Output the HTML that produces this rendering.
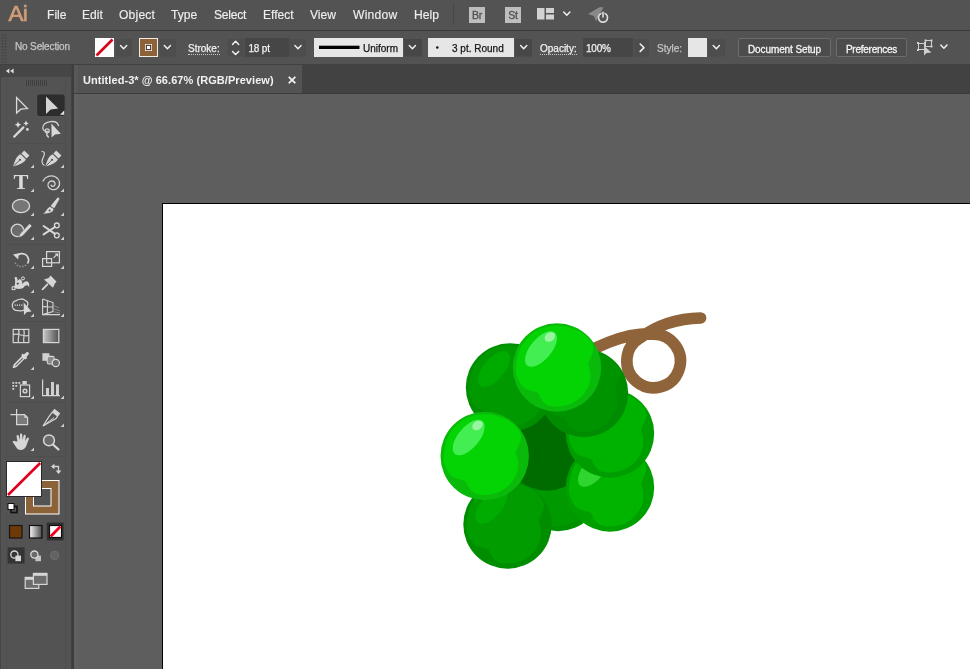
<!DOCTYPE html>
<html lang="en">
<head>
<meta charset="utf-8">
<title>Untitled-3* @ 66.67% (RGB/Preview)</title>
<style>
*{box-sizing:border-box;margin:0;padding:0}
html,body{width:970px;height:669px;overflow:hidden;background:#535353}
body{position:relative;will-change:transform;font-family:"Liberation Sans",sans-serif;color:#e6e6e6;font-size:12px}
svg{position:absolute;overflow:visible;display:block}
#menubar{position:absolute;left:0;top:0;width:970px;height:30px;background:#535353}
#logo{position:absolute;left:8.500px;top:1px;font-size:22.500px;line-height:26px;color:#cf9c76;letter-spacing:-0.800px;-webkit-text-stroke:0.700px #cf9c76}
#menubar .mi{position:absolute;top:7px;font-size:12.100px;line-height:16px;color:#eeeeee;white-space:nowrap;-webkit-text-stroke:0.150px #eeeeee}
.appbox{position:absolute;top:7px;width:16px;height:16px;background:#bebebe;color:#505050;font-size:10.500px;font-weight:400;line-height:17px;text-align:center;letter-spacing:-0.200px;-webkit-text-stroke:0.300px #505050}
#sepline{position:absolute;left:0;top:30px;width:970px;height:1px;background:#3b3b3b}
#ctrl{position:absolute;left:0;top:31px;width:970px;height:33px;background:#535353}
#ctrlb{position:absolute;left:0;top:64px;width:970px;height:1px;background:#404040}
#ctrl .t{position:absolute;font-size:10px;line-height:10.500px;padding-top:0.500px;top:12px;white-space:nowrap;color:#f0f0f0;-webkit-text-stroke:0.250px currentColor}
#ctrl .lab{border-bottom:1px dotted #c8c8c8;padding-bottom:0}
#ctrl .dk{position:absolute;top:7px;height:19px;background:#464646}
#ctrl .lt{position:absolute;top:7px;height:19px;background:#e6e6e6;color:#161616}
#ctrl .btn{position:absolute;top:7px;height:19px;background:#4c4c4c;border:1px solid #6c6c6c;border-radius:2px;font-size:10px;line-height:21px;text-align:center;color:#f4f4f4;white-space:nowrap;-webkit-text-stroke:0.300px #f4f4f4}
#tabrow{position:absolute;left:74px;top:65px;width:896px;height:29px;background:#424242;border-bottom:1px solid #3c3c3c}
#tab{position:absolute;left:0;top:0;width:228px;height:28px;background:#535353}
#tabtxt{position:absolute;left:9px;top:8px;font-size:11px;font-weight:700;line-height:14px;color:#f2f2f2;white-space:nowrap;letter-spacing:0.060px}
#tabx{position:absolute;left:213.500px;top:7.500px;font-size:15.500px;font-weight:700;line-height:14px;color:#f2f2f2}
#canvas{position:absolute;left:74px;top:94px;width:896px;height:575px;background:#5e5e5e}
#artboard{position:absolute;left:162px;top:203px;width:820px;height:480px;background:#fff;border:1px solid #000}
#tools{position:absolute;left:0;top:65px;width:74px;height:604px;background:#535353}
#toolhead{position:absolute;left:1px;top:0;width:71px;height:12px;background:#464646}
#toolbr{position:absolute;left:71px;top:0;width:3px;height:604px;background:linear-gradient(90deg,#494949 0,#3c3c3c 34%,#3c3c3c 80%,#4c4c4c 100%)}
#toolbl{position:absolute;left:0;top:0;width:1px;height:604px;background:#454545}
#edgeband{position:absolute;left:74px;top:65px;width:4px;height:604px;background:linear-gradient(180deg,#585858 0,#585858 28px,#3c3c3c 28px,#3c3c3c 29px,#616161 29px)}
.tl{position:absolute;top:12px;width:1px;height:592px;background:#4f4f4f}
</style>
</head>
<body>
<div id="menubar">
  <div id="logo">Ai</div>
  <span class="mi" style="left:47px">File</span>
  <span class="mi" style="left:82px">Edit</span>
  <span class="mi" style="left:119px;letter-spacing:0.200px">Object</span>
  <span class="mi" style="left:171px">Type</span>
  <span class="mi" style="left:214px;letter-spacing:-0.250px">Select</span>
  <span class="mi" style="left:263px">Effect</span>
  <span class="mi" style="left:310px">View</span>
  <span class="mi" style="left:353px;letter-spacing:0.250px">Window</span>
  <span class="mi" style="left:414px">Help</span>
  <div style="position:absolute;left:453px;top:3px;width:1px;height:22px;background:#474747"></div>
  <div class="appbox" style="left:469px">Br</div>
  <div class="appbox" style="left:505px">St</div>
</div>
<div id="sepline"></div>
<div id="ctrl">
  <span class="t" style="left:15px;top:10.500px;color:#c6c6c6;font-size:10px;letter-spacing:-0.150px">No Selection</span>
  <span class="t lab" style="left:188px">Stroke:</span>
  <div class="dk" style="left:245px;width:44px"></div>
  <span class="t" style="left:248.500px;letter-spacing:-0.200px">18 pt</span>
  <div class="lt" style="left:314px;width:89px"></div>
  <span class="t" style="left:363px;color:#161616">Uniform</span>
  <div class="lt" style="left:428px;width:86px"></div>
  <span class="t" style="left:452px;color:#161616">3 pt. Round</span>
  <span class="t lab" style="left:540px">Opacity:</span>
  <div class="dk" style="left:583px;width:50px"></div>
  <span class="t" style="left:586px;letter-spacing:-0.200px">100%</span>
  <span class="t" style="left:657px;color:#c4c4c4">Style:</span>
  <div class="lt" style="left:688px;width:19px"></div>
  <div class="btn" style="left:738px;width:93px;letter-spacing:-0.100px">Document Setup</div>
  <div class="btn" style="left:836px;width:71px;letter-spacing:-0.250px">Preferences</div>
</div>
<div id="ctrlb"></div>
<svg id="topsvg" width="970" height="65" viewBox="0 0 970 65" style="left:0;top:0">
<g fill="#d2d2d2"><rect x="537" y="8" width="7.5" height="11.5"/><rect x="546" y="8" width="8" height="5"/><rect x="546" y="14.5" width="8" height="5"/></g>
<path d="M563.700,12.000 L566.800,15.200 L569.900,12.000" fill="none" stroke="#f4f4f4" stroke-width="1.400" stroke-linecap="round" stroke-linejoin="round"/>
<g><path d="M588,14 L600,7 L603.500,7.500 L599.500,14 L596,21.500 L594,16 Z" fill="#8a8a8a"/><circle cx="603" cy="17.600" r="4.500" fill="#535353" stroke="#dadada" stroke-width="1.700"/><rect x="601.600" y="11" width="2.800" height="6.500" fill="#535353"/><rect x="602.200" y="11.600" width="1.600" height="6" fill="#dadada"/></g>
<path d="M2.500,34 V63 M5.500,34 V63" stroke="#434343" stroke-width="1.600" stroke-dasharray="1.500 1.500" fill="none"/>
<rect x="116" y="39" width="16" height="17.5" fill="#4d4d4d"/>
<rect x="160" y="39" width="16" height="17.5" fill="#4d4d4d"/>
<rect x="228" y="39" width="16" height="17.5" fill="#4d4d4d"/>
<rect x="289" y="39" width="17" height="17.5" fill="#4d4d4d"/>
<rect x="404" y="39" width="18" height="17.5" fill="#474747"/>
<rect x="515" y="39" width="17" height="17.5" fill="#474747"/>
<rect x="634" y="39" width="15" height="17.5" fill="#4d4d4d"/>
<rect x="708" y="39" width="17" height="17.5" fill="#4d4d4d"/>
<rect x="95" y="38" width="19" height="19" fill="#fff"/>
<path d="M96.500,55.500 L112.500,39.500" stroke="#d2081f" stroke-width="2.700" fill="none"/>
<path d="M120.500,45.600 L123.600,48.800 L126.700,45.600" fill="none" stroke="#f4f4f4" stroke-width="1.400" stroke-linecap="round" stroke-linejoin="round"/>
<rect x="139.5" y="38.5" width="18" height="18" fill="#8c6239" stroke="#f4ebe2" stroke-width="1"/>
<rect x="145.5" y="44.5" width="6" height="6" fill="#fff" stroke="#fff" stroke-width="1"/><rect x="146.3" y="45.3" width="4.4" height="4.4" fill="none" stroke="#3a2a1a" stroke-width="1.1"/>
<path d="M164.300,45.600 L167.400,48.800 L170.500,45.600" fill="none" stroke="#f4f4f4" stroke-width="1.400" stroke-linecap="round" stroke-linejoin="round"/>
<path d="M232.500,44.400 L235.600,41.200 L238.700,44.400" fill="none" stroke="#f4f4f4" stroke-width="1.400" stroke-linecap="round" stroke-linejoin="round"/>
<path d="M232.500,51.400 L235.600,54.600 L238.700,51.400" fill="none" stroke="#f4f4f4" stroke-width="1.400" stroke-linecap="round" stroke-linejoin="round"/>
<path d="M294.900,45.600 L298.000,48.800 L301.100,45.600" fill="none" stroke="#f4f4f4" stroke-width="1.400" stroke-linecap="round" stroke-linejoin="round"/>
<rect x="319" y="45.7" width="40.5" height="3.3" fill="#000"/>
<path d="M409.300,45.600 L412.400,48.800 L415.500,45.600" fill="none" stroke="#f4f4f4" stroke-width="1.400" stroke-linecap="round" stroke-linejoin="round"/>
<circle cx="437.300" cy="47.600" r="1.250" fill="#111"/>
<path d="M520.600,45.600 L523.700,48.800 L526.800,45.600" fill="none" stroke="#f4f4f4" stroke-width="1.400" stroke-linecap="round" stroke-linejoin="round"/>
<path d="M640.2,44 L644,47.7 L640.2,51.4" fill="none" stroke="#f2f2f2" stroke-width="1.6" stroke-linecap="round" stroke-linejoin="round"/>
<path d="M713.200,45.600 L716.300,48.800 L719.400,45.600" fill="none" stroke="#f4f4f4" stroke-width="1.400" stroke-linecap="round" stroke-linejoin="round"/>
<g fill="none" stroke="#cfcfcf" stroke-width="1"><rect x="918.5" y="43.5" width="6" height="6"/><rect x="925.5" y="40.5" width="6" height="6"/></g>
<g fill="#cfcfcf"><rect x="917" y="42" width="2" height="2"/><rect x="924" y="42" width="2" height="2"/><rect x="917" y="49" width="2" height="2"/><rect x="924" y="49" width="2" height="2"/><rect x="924.5" y="39.5" width="2" height="2"/><rect x="930.5" y="39.5" width="2" height="2"/><rect x="930.5" y="45.5" width="2" height="2"/><path d="M924,46 L924,55.5 L926.6,53 L931.5,52.6 Z"/></g>
<path d="M940.800,45.000 L943.900,48.200 L947.000,45.000" fill="none" stroke="#f4f4f4" stroke-width="1.400" stroke-linecap="round" stroke-linejoin="round"/>
</svg>
<div id="tabrow"><div id="tab"><span id="tabtxt">Untitled-3* @ 66.67% (RGB/Preview)</span><span id="tabx">×</span></div></div>
<div id="canvas"></div>
<div id="artboard"></div>
<!--ART-->
<svg id="art" width="970" height="669" viewBox="0 0 970 669" style="left:0;top:0">
<!-- stem -->
<path d="M596,347.800 C610,341 626,335.500 640,334.200 C645,333.700 650,333.800 653.600,334.200 A26.800,26.800 0 1 1 640.200,337.800 C654,327.500 674,318.500 700.600,318" fill="none" stroke="#8f643a" stroke-width="11.600" stroke-linecap="round" stroke-linejoin="round"/>
<!-- bottom centre -->
<g transform="translate(558,487)"><circle r="44.200" fill="#009000"/><path d="M0.0,-42.0 C7.0,-42.1 15.8,-39.2 21.3,-36.8 C26.7,-34.4 30.4,-30.6 32.9,-27.6 C35.5,-24.7 36.2,-22.1 36.4,-19.3 C36.6,-16.6 35.1,-13.7 34.2,-11.1 C33.4,-8.5 31.5,-6.2 31.3,-3.8 C31.0,-1.5 32.5,0.7 32.9,2.9 C33.2,5.0 33.5,6.4 33.3,8.9 C33.1,11.5 33.1,14.9 31.6,18.2 C30.1,21.6 27.5,26.1 24.4,29.1 C21.4,32.1 17.3,34.8 13.3,36.5 C9.2,38.1 3.9,38.9 0.0,39.0 C-3.9,39.1 -7.4,38.3 -10.0,37.2 C-12.5,36.1 -13.7,34.6 -15.2,32.6 C-16.8,30.7 -17.3,27.2 -19.3,25.6 C-21.3,23.9 -24.8,23.8 -27.2,22.8 C-29.6,21.8 -31.7,21.5 -33.8,19.5 C-35.8,17.5 -38.2,13.8 -39.4,10.6 C-40.6,7.3 -41.6,5.2 -41.0,0.0 C-40.4,-5.2 -39.3,-14.7 -35.9,-20.8 C-32.6,-26.8 -27.0,-32.8 -21.0,-36.4 C-15.0,-39.9 -7.0,-41.9 0.0,-42.0 Z" fill="#009a00"/></g>
<!-- bottom left -->
<g transform="translate(507.5,524.5)"><circle r="44.200" fill="#008e00"/><path d="M0.0,-42.0 C7.0,-42.1 15.8,-39.2 21.3,-36.8 C26.7,-34.4 30.4,-30.6 32.9,-27.6 C35.5,-24.7 36.2,-22.1 36.4,-19.3 C36.6,-16.6 35.1,-13.7 34.2,-11.1 C33.4,-8.5 31.5,-6.2 31.3,-3.8 C31.0,-1.5 32.5,0.7 32.9,2.9 C33.2,5.0 33.5,6.4 33.3,8.9 C33.1,11.5 33.1,14.9 31.6,18.2 C30.1,21.6 27.5,26.1 24.4,29.1 C21.4,32.1 17.3,34.8 13.3,36.5 C9.2,38.1 3.9,38.9 0.0,39.0 C-3.9,39.1 -7.4,38.3 -10.0,37.2 C-12.5,36.1 -13.7,34.6 -15.2,32.6 C-16.8,30.7 -17.3,27.2 -19.3,25.6 C-21.3,23.9 -24.8,23.8 -27.2,22.8 C-29.6,21.8 -31.7,21.5 -33.8,19.5 C-35.8,17.5 -38.2,13.8 -39.4,10.6 C-40.6,7.3 -41.6,5.2 -41.0,0.0 C-40.4,-5.2 -39.3,-14.7 -35.9,-20.8 C-32.6,-26.8 -27.0,-32.8 -21.0,-36.4 C-15.0,-39.9 -7.0,-41.9 0.0,-42.0 Z" fill="#009c00"/><ellipse cx="-16" cy="-18.500" rx="10.500" ry="21.500" transform="rotate(40 -16 -18.500)" fill="#00ac00"/></g>
<!-- centre dark -->
<circle cx="547" cy="446.500" r="44.200" fill="#006c00"/>
<!-- right lower -->
<g transform="translate(610,487.5)"><circle r="44.200" fill="#009f00"/><path d="M0.0,-42.0 C7.0,-42.1 15.8,-39.2 21.3,-36.8 C26.7,-34.4 30.4,-30.6 32.9,-27.6 C35.5,-24.7 36.2,-22.1 36.4,-19.3 C36.6,-16.6 35.1,-13.7 34.2,-11.1 C33.4,-8.5 31.5,-6.2 31.3,-3.8 C31.0,-1.5 32.5,0.7 32.9,2.9 C33.2,5.0 33.5,6.4 33.3,8.9 C33.1,11.5 33.1,14.9 31.6,18.2 C30.1,21.6 27.5,26.1 24.4,29.1 C21.4,32.1 17.3,34.8 13.3,36.5 C9.2,38.1 3.9,38.9 0.0,39.0 C-3.9,39.1 -7.4,38.3 -10.0,37.2 C-12.5,36.1 -13.7,34.6 -15.2,32.6 C-16.8,30.7 -17.3,27.2 -19.3,25.6 C-21.3,23.9 -24.8,23.8 -27.2,22.8 C-29.6,21.8 -31.7,21.5 -33.8,19.5 C-35.8,17.5 -38.2,13.8 -39.4,10.6 C-40.6,7.3 -41.6,5.2 -41.0,0.0 C-40.4,-5.2 -39.3,-14.7 -35.9,-20.8 C-32.6,-26.8 -27.0,-32.8 -21.0,-36.4 C-15.0,-39.9 -7.0,-41.9 0.0,-42.0 Z" fill="#00b400"/><ellipse cx="-16" cy="-18.500" rx="10.500" ry="21.500" transform="rotate(40 -16 -18.500)" fill="#2fd62f"/></g>
<!-- right mid -->
<g transform="translate(610,433.5)"><circle r="44.200" fill="#009d00"/><path d="M0.0,-42.0 C7.0,-42.1 15.8,-39.2 21.3,-36.8 C26.7,-34.4 30.4,-30.6 32.9,-27.6 C35.5,-24.7 36.2,-22.1 36.4,-19.3 C36.6,-16.6 35.1,-13.7 34.2,-11.1 C33.4,-8.5 31.5,-6.2 31.3,-3.8 C31.0,-1.5 32.5,0.7 32.9,2.9 C33.2,5.0 33.5,6.4 33.3,8.9 C33.1,11.5 33.1,14.9 31.6,18.2 C30.1,21.6 27.5,26.1 24.4,29.1 C21.4,32.1 17.3,34.8 13.3,36.5 C9.2,38.1 3.9,38.9 0.0,39.0 C-3.9,39.1 -7.4,38.3 -10.0,37.2 C-12.5,36.1 -13.7,34.6 -15.2,32.6 C-16.8,30.7 -17.3,27.2 -19.3,25.6 C-21.3,23.9 -24.8,23.8 -27.2,22.8 C-29.6,21.8 -31.7,21.5 -33.8,19.5 C-35.8,17.5 -38.2,13.8 -39.4,10.6 C-40.6,7.3 -41.6,5.2 -41.0,0.0 C-40.4,-5.2 -39.3,-14.7 -35.9,-20.8 C-32.6,-26.8 -27.0,-32.8 -21.0,-36.4 C-15.0,-39.9 -7.0,-41.9 0.0,-42.0 Z" fill="#00b200"/></g>
<!-- top-left dark -->
<g transform="translate(510,387.5)"><circle r="44.200" fill="#008e00"/><path d="M0.0,-42.0 C7.0,-42.1 15.8,-39.2 21.3,-36.8 C26.7,-34.4 30.4,-30.6 32.9,-27.6 C35.5,-24.7 36.2,-22.1 36.4,-19.3 C36.6,-16.6 35.1,-13.7 34.2,-11.1 C33.4,-8.5 31.5,-6.2 31.3,-3.8 C31.0,-1.5 32.5,0.7 32.9,2.9 C33.2,5.0 33.5,6.4 33.3,8.9 C33.1,11.5 33.1,14.9 31.6,18.2 C30.1,21.6 27.5,26.1 24.4,29.1 C21.4,32.1 17.3,34.8 13.3,36.5 C9.2,38.1 3.9,38.9 0.0,39.0 C-3.9,39.1 -7.4,38.3 -10.0,37.2 C-12.5,36.1 -13.7,34.6 -15.2,32.6 C-16.8,30.7 -17.3,27.2 -19.3,25.6 C-21.3,23.9 -24.8,23.8 -27.2,22.8 C-29.6,21.8 -31.7,21.5 -33.8,19.5 C-35.8,17.5 -38.2,13.8 -39.4,10.6 C-40.6,7.3 -41.6,5.2 -41.0,0.0 C-40.4,-5.2 -39.3,-14.7 -35.9,-20.8 C-32.6,-26.8 -27.0,-32.8 -21.0,-36.4 C-15.0,-39.9 -7.0,-41.9 0.0,-42.0 Z" fill="#009900"/><ellipse cx="-16" cy="-18.500" rx="10.500" ry="21.500" transform="rotate(40 -16 -18.500)" fill="#00ab00"/></g>
<!-- behind top right -->
<g transform="translate(584,393)"><circle r="44.200" fill="#008c00"/><path d="M0.0,-42.0 C7.0,-42.1 15.8,-39.2 21.3,-36.8 C26.7,-34.4 30.4,-30.6 32.9,-27.6 C35.5,-24.7 36.2,-22.1 36.4,-19.3 C36.6,-16.6 35.1,-13.7 34.2,-11.1 C33.4,-8.5 31.5,-6.2 31.3,-3.8 C31.0,-1.5 32.5,0.7 32.9,2.9 C33.2,5.0 33.5,6.4 33.3,8.9 C33.1,11.5 33.1,14.9 31.6,18.2 C30.1,21.6 27.5,26.1 24.4,29.1 C21.4,32.1 17.3,34.8 13.3,36.5 C9.2,38.1 3.9,38.9 0.0,39.0 C-3.9,39.1 -7.4,38.3 -10.0,37.2 C-12.5,36.1 -13.7,34.6 -15.2,32.6 C-16.8,30.7 -17.3,27.2 -19.3,25.6 C-21.3,23.9 -24.8,23.8 -27.2,22.8 C-29.6,21.8 -31.7,21.5 -33.8,19.5 C-35.8,17.5 -38.2,13.8 -39.4,10.6 C-40.6,7.3 -41.6,5.2 -41.0,0.0 C-40.4,-5.2 -39.3,-14.7 -35.9,-20.8 C-32.6,-26.8 -27.0,-32.8 -21.0,-36.4 C-15.0,-39.9 -7.0,-41.9 0.0,-42.0 Z" fill="#009300"/></g>
<!-- left bright -->
<g transform="translate(484.7,456)"><circle r="44.200" fill="#0aba0a"/><path d="M0.0,-42.0 C7.0,-42.1 15.8,-39.2 21.3,-36.8 C26.7,-34.4 30.4,-30.6 32.9,-27.6 C35.5,-24.7 36.2,-22.1 36.4,-19.3 C36.6,-16.6 35.1,-13.7 34.2,-11.1 C33.4,-8.5 31.5,-6.2 31.3,-3.8 C31.0,-1.5 32.5,0.7 32.9,2.9 C33.2,5.0 33.5,6.4 33.3,8.9 C33.1,11.5 33.1,14.9 31.6,18.2 C30.1,21.6 27.5,26.1 24.4,29.1 C21.4,32.1 17.3,34.8 13.3,36.5 C9.2,38.1 3.9,38.9 0.0,39.0 C-3.9,39.1 -7.4,38.3 -10.0,37.2 C-12.5,36.1 -13.7,34.6 -15.2,32.6 C-16.8,30.7 -17.3,27.2 -19.3,25.6 C-21.3,23.9 -24.8,23.8 -27.2,22.8 C-29.6,21.8 -31.7,21.5 -33.8,19.5 C-35.8,17.5 -38.2,13.8 -39.4,10.6 C-40.6,7.3 -41.6,5.2 -41.0,0.0 C-40.4,-5.2 -39.3,-14.7 -35.9,-20.8 C-32.6,-26.8 -27.0,-32.8 -21.0,-36.4 C-15.0,-39.9 -7.0,-41.9 0.0,-42.0 Z" fill="#04d404"/><ellipse cx="-16" cy="-18.500" rx="10.500" ry="21.500" transform="rotate(40 -16 -18.500)" fill="#42ee52"/><ellipse cx="-7.200" cy="-30.500" rx="5.600" ry="4.400" transform="rotate(-35 -7.200 -30.500)" fill="#9af5a2"/></g>
<!-- top bright -->
<g transform="translate(557,367.5)"><circle r="44.200" fill="#0aba0a"/><path d="M0.0,-42.0 C7.0,-42.1 15.8,-39.2 21.3,-36.8 C26.7,-34.4 30.4,-30.6 32.9,-27.6 C35.5,-24.7 36.2,-22.1 36.4,-19.3 C36.6,-16.6 35.1,-13.7 34.2,-11.1 C33.4,-8.5 31.5,-6.2 31.3,-3.8 C31.0,-1.5 32.5,0.7 32.9,2.9 C33.2,5.0 33.5,6.4 33.3,8.9 C33.1,11.5 33.1,14.9 31.6,18.2 C30.1,21.6 27.5,26.1 24.4,29.1 C21.4,32.1 17.3,34.8 13.3,36.5 C9.2,38.1 3.9,38.9 0.0,39.0 C-3.9,39.1 -7.4,38.3 -10.0,37.2 C-12.5,36.1 -13.7,34.6 -15.2,32.6 C-16.8,30.7 -17.3,27.2 -19.3,25.6 C-21.3,23.9 -24.8,23.8 -27.2,22.8 C-29.6,21.8 -31.7,21.5 -33.8,19.5 C-35.8,17.5 -38.2,13.8 -39.4,10.6 C-40.6,7.3 -41.6,5.2 -41.0,0.0 C-40.4,-5.2 -39.3,-14.7 -35.9,-20.8 C-32.6,-26.8 -27.0,-32.8 -21.0,-36.4 C-15.0,-39.9 -7.0,-41.9 0.0,-42.0 Z" fill="#04d404"/><ellipse cx="-16" cy="-18.500" rx="10.500" ry="21.500" transform="rotate(40 -16 -18.500)" fill="#42ee52"/><ellipse cx="-7.200" cy="-30.500" rx="5.600" ry="4.400" transform="rotate(-35 -7.200 -30.500)" fill="#9af5a2"/></g>
</svg>
<!--/ART-->
<div id="tools"><div id="toolhead"></div><div class="tl" style="left:6px"></div><div class="tl" style="left:65px"></div><div id="toolbl"></div><div id="toolbr"></div></div>
<div id="edgeband"></div>
<div style="position:absolute;left:43px;top:329px;width:16px;height:14px;background:linear-gradient(90deg,#cacaca,#4e4e4e)"></div>
<div style="position:absolute;left:29px;top:525px;width:13px;height:13px;background:linear-gradient(90deg,#ffffff,#484848)"></div>
<!--TOOLSVG-->
<svg id="toolsvg" width="74" height="604" viewBox="0 65 74 604" style="left:0;top:65px">
<!-- collapse arrows -->
<g fill="#dedede"><path d="M9.300,68.500 L9.300,73.500 L5.900,71 Z"/><path d="M13.600,68.500 L13.600,73.500 L10.200,71 Z"/></g>
<!-- grip -->
<g stroke="#404040" stroke-width="1"><path d="M26.5,80 v6 M28.5,80 v6 M30.5,80 v6 M32.5,80 v6 M34.5,80 v6 M36.5,80 v6 M38.5,80 v6 M40.5,80 v6 M42.5,80 v6 M44.5,80 v6 M46.5,80 v6"/></g>
<!-- separators -->
<g stroke="#4e4e4e" stroke-width="1"><path d="M8,143.5 H66 M8,244.5 H66 M8,321.5 H66 M8,402.5 H66 M8,456.5 H66"/></g>
<!-- flyout triangles -->
<g fill="#cfcfcf">
<path d="M64.2,110.6 v4.2 h-4.2 Z"/>
<path d="M34,164.6 v3.400 h-3.400 Z"/><path d="M64,164.6 v3.400 h-3.400 Z"/>
<path d="M34,188.6 v3.400 h-3.400 Z"/><path d="M64,188.6 v3.400 h-3.400 Z"/>
<path d="M34,212.6 v3.400 h-3.400 Z"/><path d="M64,212.6 v3.400 h-3.400 Z"/>
<path d="M34,236.6 v3.400 h-3.400 Z"/><path d="M64,236.6 v3.400 h-3.400 Z"/>
<path d="M34,265.6 v3.400 h-3.400 Z"/><path d="M64,265.6 v3.400 h-3.400 Z"/>
<path d="M34,289.6 v3.400 h-3.400 Z"/><path d="M64,289.6 v3.400 h-3.400 Z"/>
<path d="M34,313.6 v3.400 h-3.400 Z"/><path d="M64,313.6 v3.400 h-3.400 Z"/>
<path d="M34,366.6 v3.400 h-3.400 Z"/>
<path d="M34,395.6 v3.400 h-3.400 Z"/><path d="M64,395.6 v3.400 h-3.400 Z"/>
<path d="M64,423.6 v3.400 h-3.400 Z"/>
<path d="M34,447.6 v3.400 h-3.400 Z"/>
</g>
<!-- 1 selection tool -->
<path d="M16.6,97.6 L16.6,113 L20.8,109.2 L27.4,108.6 Z" fill="none" stroke="#dadada" stroke-width="1.3" stroke-linejoin="miter"/>
<!-- 2 direct selection (active) -->
<rect x="37.2" y="94.4" width="27.4" height="21.6" rx="2.2" fill="#2d2d2d"/>
<path d="M46,96.4 L46,114 L50.6,109.6 L58.2,108.6 Z" fill="#d4d4d4"/>
<path d="M64.2,110.6 v4.2 h-4.2 Z" fill="#e4e4e4"/>
<!-- 3 magic wand -->
<g stroke="#d8d8d8" stroke-width="2.2" stroke-linecap="round"><path d="M14.2,136.6 L23.4,127.4"/></g>
<g fill="#dcdcdc"><path d="M18,121.6 l1,2.2 2.2,1 -2.2,1 -1,2.2 -1,-2.2 -2.2,-1 2.2,-1 Z"/><path d="M26,120.6 l0.9,1.9 1.9,0.9 -1.9,0.9 -0.9,1.9 -0.9,-1.9 -1.9,-0.9 1.9,-0.9 Z"/><circle cx="27.4" cy="129.4" r="1.4"/></g>
<!-- 4 lasso -->
<g fill="none" stroke="#d2d2d2" stroke-width="1.3"><path d="M58.6,126.2 C58,122.6 54.4,121.2 50.6,121.6 C45.8,122 42.4,124.6 42.8,128 C43.1,130.4 45.6,131.6 48.4,131.4"/><circle cx="47.2" cy="130.8" r="2"/><path d="M47,132.6 C46.4,134.6 47.2,136.4 48.8,137.4"/></g>
<path d="M51.4,123.6 L51.6,137.6 L55,134.4 L60.8,133.8 Z" fill="#d8d8d8"/>
<!-- 5 pen -->
<g fill="#d6d6d6"><path d="M24.2,150.6 L29.4,155.6 L26.6,158.4 L21.4,153.4 Z"/><path d="M20.6,154.2 L25.8,159.2 C24.4,162.4 21,164.2 13,166.6 C15.2,159 17.2,155.6 20.6,154.2 Z"/></g>
<path d="M13.4,166.2 L19.6,160.2" stroke="#535353" stroke-width="0.9"/><circle cx="20" cy="159.8" r="1.1" fill="#535353"/>
<!-- 6 curvature pen -->
<g fill="#d6d6d6"><path d="M56.2,150.6 L61.4,155.6 L58.6,158.4 L53.4,153.4 Z"/><path d="M52.6,154.2 L57.8,159.2 C56.4,162.4 53,164.2 45.4,166.6 C47.4,159.2 49.2,155.6 52.6,154.2 Z"/></g>
<path d="M45.8,166.2 L51.6,160.2" stroke="#535353" stroke-width="0.9"/><circle cx="52" cy="159.8" r="1.1" fill="#535353"/>
<path d="M41.6,151.6 C44.6,151 45,153.6 43.6,156.6 C42,160 40.6,163 44.4,165.6" fill="none" stroke="#d2d2d2" stroke-width="1.2"/>
<!-- 7 type -->
<text transform="translate(21,189) scale(1.120,1)" x="0" y="0" font-family="'Liberation Serif',serif" font-size="20" font-weight="700" text-anchor="middle" fill="#dadada">T</text>
<!-- 8 spiral -->
<path d="M43,181 C45,176.600 51,174.600 55.600,177 C60,179.400 60.800,185 57.600,188 C54.600,190.800 49.600,190 48.200,186.600 C47,183.600 49.400,180.800 52.200,181 C54.600,181.200 55.800,183.600 54.600,185.400 C53.600,186.800 51.600,186.600 51.200,185.200" fill="none" stroke="#d4d4d4" stroke-width="1.300" stroke-linecap="round"/>
<!-- 9 ellipse -->
<ellipse cx="21" cy="206" rx="8.6" ry="6.6" fill="#767676" stroke="#d8d8d8" stroke-width="1.3"/>
<!-- 10 brush -->
<g fill="#d8d8d8"><path d="M57.6,197.6 C58.8,197.4 59.6,198.4 59.2,199.6 L54.2,208.2 L50.6,206 Z"/><path d="M50,206.8 L53.6,209 C53.4,211.6 51,213.2 43,213.8 C46.2,212 46.6,208.6 50,206.8 Z"/></g>
<circle cx="49.6" cy="210.6" r="1" fill="#535353"/>
<!-- 11 shaper -->
<circle cx="17.4" cy="230.4" r="6.2" fill="#6c6c6c" stroke="#d6d6d6" stroke-width="1.3"/>
<path d="M29.6,223.6 L32,226 L22.6,236 L18.4,238 L20,233.8 Z" fill="#dadada" stroke="#535353" stroke-width="0.6"/>
<!-- 12 scissors -->
<g fill="none" stroke="#d8d8d8" stroke-width="1.3"><circle cx="56.8" cy="225.4" r="2.4"/><circle cx="56.8" cy="235.4" r="2.4"/></g>
<g stroke="#d8d8d8" stroke-width="2" stroke-linecap="round"><path d="M43.6,226 L55,233.8"/><path d="M43.6,234.4 L55,227"/></g>
<!-- 13 rotate -->
<path d="M16,256.6 C19.4,252.2 26,252.8 28,257.6 C29,260 28.6,262 27.4,263.6" fill="none" stroke="#d8d8d8" stroke-width="1.7"/>
<path d="M13,254.6 L18.8,253.2 L18.2,259.4 Z" fill="#d8d8d8"/>
<path d="M26,265 C22,268 16,266.6 14.6,261.4" fill="none" stroke="#9a9a9a" stroke-width="1.4" stroke-dasharray="1.4 1.4"/>
<!-- 14 scale -->
<g fill="none" stroke="#d8d8d8" stroke-width="1.2"><rect x="46.6" y="251.6" width="12.8" height="11.2"/><rect x="42.6" y="258.6" width="9" height="7.8"/><path d="M53.6,257.8 L57.2,254.2"/></g>
<path d="M54.6,253.4 h3.6 v3.6 Z" fill="#d8d8d8"/>
<!-- 15 width -->
<path d="M14.6,277.4 C16.8,276 18,278.4 17.4,281 C20,277.2 23,280.8 22,284 C24.6,281 28.2,279.6 29.2,284.2 L29.2,287.4 C27.4,284 25,285.4 23.4,287.8 C20.6,289.6 15.2,289.4 14.2,287 C15.4,284 15.4,280.6 14.6,277.4 Z" fill="#d6d6d6"/>
<g fill="#535353" stroke="#e0e0e0" stroke-width="1"><circle cx="17.8" cy="283.6" r="1.6"/><circle cx="23" cy="278.4" r="1.5"/><rect x="12.2" y="286.8" width="2.8" height="2.8"/></g>
<!-- 16 pin -->
<g fill="#d6d6d6"><path d="M50.6,275.6 L56.6,281.8 L54.8,283.4 L53,287.8 L44,279.6 L48.6,278 Z"/></g>
<path d="M42.6,289.4 L47.4,284.4" stroke="#d6d6d6" stroke-width="1.8" stroke-linecap="round"/>
<!-- 17 shape builder -->
<path d="M16.4,300.6 C18.6,298.6 23.4,298.4 25.4,300.6 C28.6,301.4 28.2,304.4 27,306.4 C26.6,309.6 22.6,311.4 19,310.6 C14.6,311 11.6,308.4 12.4,305 C12.6,302.4 14.2,301 16.4,300.6 Z" fill="none" stroke="#d4d4d4" stroke-width="1.3"/>
<path d="M14.6,305.2 H23" stroke="#e0e0e0" stroke-width="1.2" stroke-dasharray="1.2 1"/>
<path d="M23.6,302.6 L24,315 L27,312 L31.6,311.4 Z" fill="#d8d8d8"/>
<!-- 18 perspective grid -->
<g fill="none" stroke="#d6d6d6" stroke-width="1.1"><path d="M42.6,299 L42.6,314.6 L60,314.6"/><path d="M42.6,299 L53,302.6 L53,311.6 L42.6,314.6"/><path d="M47.4,300.6 L47.4,313.2 M42.6,306.6 L53,307"/></g>
<g fill="none" stroke="#8e8e8e" stroke-width="0.9"><path d="M53,305 L59,308 M53,308.4 L60,311 M53,311.6 L60,313"/></g>
<!-- 19 mesh -->
<g fill="none" stroke="#d6d6d6" stroke-width="1.2"><rect x="13.2" y="329.4" width="15.6" height="13.2"/><path d="M18.4,329.4 C20.6,333.6 17,338.6 18.6,342.6 M23.6,329.4 C25.8,333.6 22.4,338.6 24,342.6 M13.2,334.6 C18,332.6 24,337.4 28.8,335.4"/></g>
<!-- 20 gradient -->
<rect x="43.4" y="329.4" width="15.4" height="13.2" fill="none" stroke="#d6d6d6" stroke-width="1.2"/>
<!-- 21 eyedropper -->
<path d="M26.6,352.2 C28,351.4 29.4,352.6 28.8,354.2 L26.4,357 L27.2,358 L25.6,359.6 L24.8,358.8 L16.6,367 L13.4,368.2 L12.6,367.4 L13.8,364.2 L22,356 L21.2,355.2 L22.8,353.6 L23.8,354.6 Z" fill="#d8d8d8"/>
<path d="M22.4,358 L15.6,364.8 L15,366 L16.2,365.6 L23.2,358.6 Z" fill="#535353"/>
<!-- 22 blend -->
<rect x="42.4" y="353.2" width="7" height="7.6" fill="#d0d0d0"/>
<rect x="47.2" y="356.4" width="7" height="7.6" rx="1.8" fill="#8a8a8a" stroke="#d8d8d8" stroke-width="1.1"/>
<circle cx="55.8" cy="363" r="3.6" fill="#6a6a6a" stroke="#d8d8d8" stroke-width="1.2"/>
<!-- 23 symbol sprayer -->
<g fill="#d4d4d4"><rect x="12.4" y="382" width="1.8" height="1.8"/><rect x="15.4" y="382" width="1.8" height="1.8"/><rect x="18.4" y="382" width="1.8" height="1.8"/><rect x="12.4" y="385" width="1.8" height="1.8"/><rect x="15.4" y="385" width="1.8" height="1.8"/><rect x="12.4" y="388" width="1.8" height="1.8"/><rect x="22.4" y="381" width="4.4" height="3.4"/></g>
<rect x="20.4" y="385" width="9.2" height="11.6" fill="none" stroke="#d6d6d6" stroke-width="1.2"/>
<circle cx="25" cy="391" r="2.6" fill="#d0d0d0"/><circle cx="25" cy="391" r="1" fill="#4a4a4a"/>
<!-- 24 graph -->
<path d="M42.6,379.6 L42.6,395.6 L60,395.6" fill="none" stroke="#d6d6d6" stroke-width="1.2"/>
<g fill="#cfcfcf"><rect x="46" y="388" width="3" height="7.4"/><rect x="51" y="382" width="3" height="13.4"/><rect x="56" y="384.4" width="3" height="11"/></g>
<!-- 25 artboard -->
<path d="M16.6,414.6 L24.6,414.6 L27.6,417.6 L27.6,424.6 L16.6,424.6 Z" fill="#7a7a7a" stroke="#d6d6d6" stroke-width="1.2"/>
<path d="M16.6,409 V414.6 M10.4,414.6 H16.6" stroke="#d6d6d6" stroke-width="1.2" fill="none"/>
<path d="M24.4,414.8 v3 h3 Z" fill="#d6d6d6"/>
<!-- 26 slice -->
<path d="M54.6,409.6 L59.4,413.4 L56,418.6 L43,426 L49.6,415.6 Z" fill="none" stroke="#d6d6d6" stroke-width="1.2"/>
<path d="M54.6,409.6 L59.4,413.4 L57.2,416.6 L52.4,412.8 Z" fill="#d6d6d6"/>
<path d="M43.4,425.6 L54,417.6" stroke="#d6d6d6" stroke-width="1"/>
<!-- 27 hand -->
<path d="M17.4,441.6 L16.6,436.4 C16.4,434.8 18.4,434.4 18.8,436 L19.8,440 L20,434.6 C20,433 22.2,433 22.2,434.6 L22.6,440 L23.6,435.6 C24,434 26,434.6 25.8,436.2 L25.2,441 L27,438 C27.8,436.8 29.4,437.8 28.8,439.2 L26,446.6 C25,449 23,450 20.8,450 C18.600,450 17,449 16,447 L13,442.600 C12.200,441.200 13.800,440.200 14.800,441.200 Z" fill="#d6d6d6"/>
<!-- 28 zoom -->
<circle cx="49" cy="440.4" r="5.4" fill="#6a6a6a" stroke="#d8d8d8" stroke-width="1.5"/>
<path d="M53.2,444.8 L58.4,449.4" stroke="#d8d8d8" stroke-width="2.2" stroke-linecap="round"/>
<!-- fill / stroke -->
<rect x="25.5" y="480.500" width="33.500" height="33.500" fill="#8c6239" stroke="#ffffff" stroke-width="1"/>
<rect x="33.500" y="488.500" width="17.500" height="17.500" fill="#535353" stroke="#ffffff" stroke-width="1"/>
<rect x="6.500" y="461.500" width="35" height="35" fill="#ffffff" stroke="#2a2a2a" stroke-width="1"/>
<path d="M8,495 L40.200,463" stroke="#e0001e" stroke-width="2.600" fill="none"/>
<!-- swap -->
<g fill="none" stroke="#d2d2d2" stroke-width="1.300"><path d="M54,466.500 H58.500 V471"/></g>
<g fill="#d8d8d8"><path d="M51,466.500 l3.400,-2.800 v5.600 Z"/><path d="M58.500,474 l-2.800,-3.400 h5.600 Z"/></g>
<!-- default -->
<rect x="11" y="506.500" width="6" height="6" fill="none" stroke="#111" stroke-width="1.600"/>
<rect x="8" y="503.500" width="6" height="6" fill="#fff" stroke="#111" stroke-width="1"/>
<!-- color / gradient / none -->
<rect x="9.500" y="525.500" width="12.500" height="12.500" fill="#6c3a06" stroke="#151515" stroke-width="1.200"/>
<rect x="29.500" y="525.500" width="12.500" height="12.500" fill="none" stroke="#101010" stroke-width="1.200"/>
<rect x="46.800" y="522.600" width="16.800" height="17.800" fill="#303030"/>
<rect x="49.500" y="525.500" width="12" height="12" fill="#fff" stroke="#101010" stroke-width="1.200"/>
<path d="M50.600,536.400 L60.400,526.600" stroke="#f0001a" stroke-width="2.800" fill="none"/>
<!-- draw modes -->
<rect x="7.600" y="547.400" width="17" height="16.200" fill="#343434"/>
<circle cx="14.400" cy="554.600" r="3.600" fill="none" stroke="#d8d8d8" stroke-width="1.300"/>
<rect x="15.400" y="555.600" width="5.600" height="5.600" fill="#d8d8d8"/>
<rect x="35.400" y="555.600" width="5.600" height="5.600" fill="#c4c4c4"/>
<circle cx="34.400" cy="554.600" r="3.600" fill="#6a6a6a" stroke="#d8d8d8" stroke-width="1.300"/>
<circle cx="54.600" cy="555.400" r="4" fill="#626262" stroke="#6e6e6e" stroke-width="1.200"/>
<!-- screen mode -->
<rect x="25.200" y="577.400" width="13.600" height="11" fill="#6c6c6c" stroke="#d6d6d6" stroke-width="1.200"/>
<rect x="25.200" y="577.400" width="13.600" height="2.400" fill="#d6d6d6"/>
<rect x="33.400" y="573.400" width="13.600" height="11" fill="#6c6c6c" stroke="#d6d6d6" stroke-width="1.200"/>
<rect x="33.400" y="573.400" width="13.600" height="2.400" fill="#d6d6d6"/>
</svg>
<!--/TOOLSVG-->
</body>
</html>
